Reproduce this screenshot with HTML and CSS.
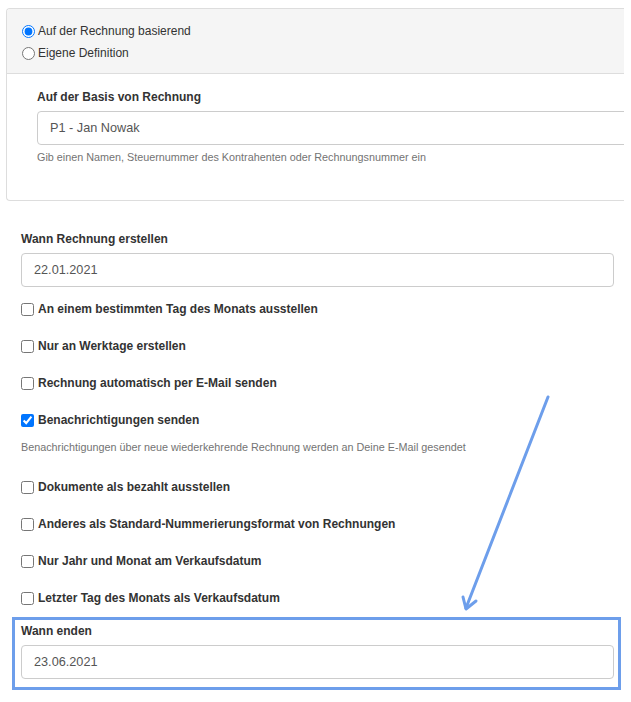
FILE: index.html
```html
<!DOCTYPE html>
<html>
<head>
<meta charset="utf-8">
<link rel="stylesheet" href="styles.css">
</head>
<body>
<div class="page">
  <div class="panel">
    <div class="panel-head">
      <label class="radio-row"><input type="radio" name="basis" checked> Auf der Rechnung basierend</label>
      <label class="radio-row"><input type="radio" name="basis"> Eigene Definition</label>
    </div>
    <div class="panel-body">
      <div class="label">Auf der Basis von Rechnung</div>
      <div class="input input-wide">P1 - Jan Nowak</div>
      <div class="help">Gib einen Namen, Steuernummer des Kontrahenten oder Rechnungsnummer ein</div>
    </div>
  </div>

  <div class="form">
    <div class="label label-first">Wann Rechnung erstellen</div>
    <div class="input">22.01.2021</div>

    <label class="check-row first"><input type="checkbox"> An einem bestimmten Tag des Monats ausstellen</label>
    <label class="check-row"><input type="checkbox"> Nur an Werktage erstellen</label>
    <label class="check-row"><input type="checkbox"> Rechnung automatisch per E-Mail senden</label>
    <label class="check-row"><input type="checkbox" checked> Benachrichtigungen senden</label>
    <div class="help help-check">Benachrichtigungen über neue wiederkehrende Rechnung werden an Deine E-Mail gesendet</div>
    <label class="check-row after-help"><input type="checkbox"> Dokumente als bezahlt ausstellen</label>
    <label class="check-row"><input type="checkbox"> Anderes als Standard-Nummerierungsformat von Rechnungen</label>
    <label class="check-row"><input type="checkbox"> Nur Jahr und Monat am Verkaufsdatum</label>
    <label class="check-row"><input type="checkbox"> Letzter Tag des Monats als Verkaufsdatum</label>
  </div>

  <div class="highlight">
    <div class="label">Wann enden</div>
    <div class="input">23.06.2021</div>
  </div>

  <svg class="arrow" width="631" height="702" viewBox="0 0 631 702">
    <line x1="548" y1="397" x2="466" y2="608" stroke="#6d9eeb" stroke-width="3" stroke-linecap="round"/>
    <polyline points="463,597 466,609 476,601" fill="none" stroke="#6d9eeb" stroke-width="3" stroke-linecap="round" stroke-linejoin="round"/>
  </svg>
</div>
</body>
</html>
```
FILE: styles.css
```css
html, body {
  margin: 0;
  padding: 0;
  background: #fff;
}
body {
  font-family: "Liberation Sans", Arial, sans-serif;
  font-size: 12px;
  color: #333;
}
.page {
  position: relative;
  width: 631px;
  height: 702px;
  overflow: hidden;
}
.panel {
  margin: 8px 0 0 6px;
  width: 617px;
  border: 1px solid #dddddd;
  border-right: none;
  border-radius: 4px 0 0 4px;
  overflow: hidden;
}
.panel-head {
  background: #f5f5f5;
  border-bottom: 1px solid #dddddd;
  padding: 11px 0 9px 15px;
}
.radio-row {
  display: flex;
  align-items: center;
  height: 22px;
  line-height: 22px;
  color: #333;
}
.radio-row input {
  margin: 0 3px 0 0;
  width: 13px;
  height: 13px;
}
.panel-body {
  padding: 14px 0 35px 30px;
}
.label {
  font-weight: bold;
  line-height: 18px;
  height: 18px;
  margin-bottom: 5px;
  color: #333;
}
.label-first {
  margin-top: 29px;
}
.input {
  box-sizing: border-box;
  height: 34px;
  line-height: 20px;
  padding: 6px 12px;
  border: 1px solid #cccccc;
  border-radius: 4px;
  color: #555;
  font-size: 12.7px;
  width: 593px;
}
.input-wide {
  width: 600px;
}
.help {
  margin-top: 4px;
  font-size: 10.8px;
  line-height: 16px;
  color: #737373;
}
.form {
  padding-left: 21px;
}
.check-row {
  display: flex;
  align-items: center;
  height: 18px;
  line-height: 18px;
  font-weight: bold;
  margin-top: 19px;
  color: #333;
}
.check-row.first {
  margin-top: 13px;
}
.check-row.after-help {
  margin-top: 23px;
}
.check-row input {
  margin: 0 4px 0 0;
  width: 13px;
  height: 13px;
}
.help-check {
  margin-top: 10px;
}
.highlight {
  margin: 10px 0 0 12px;
  width: 593px;
  border: 3px solid #6d9eeb;
  padding: 2px 4px 8px 6px;
}
.arrow {
  position: absolute;
  left: 0;
  top: 0;
  pointer-events: none;
}
```
